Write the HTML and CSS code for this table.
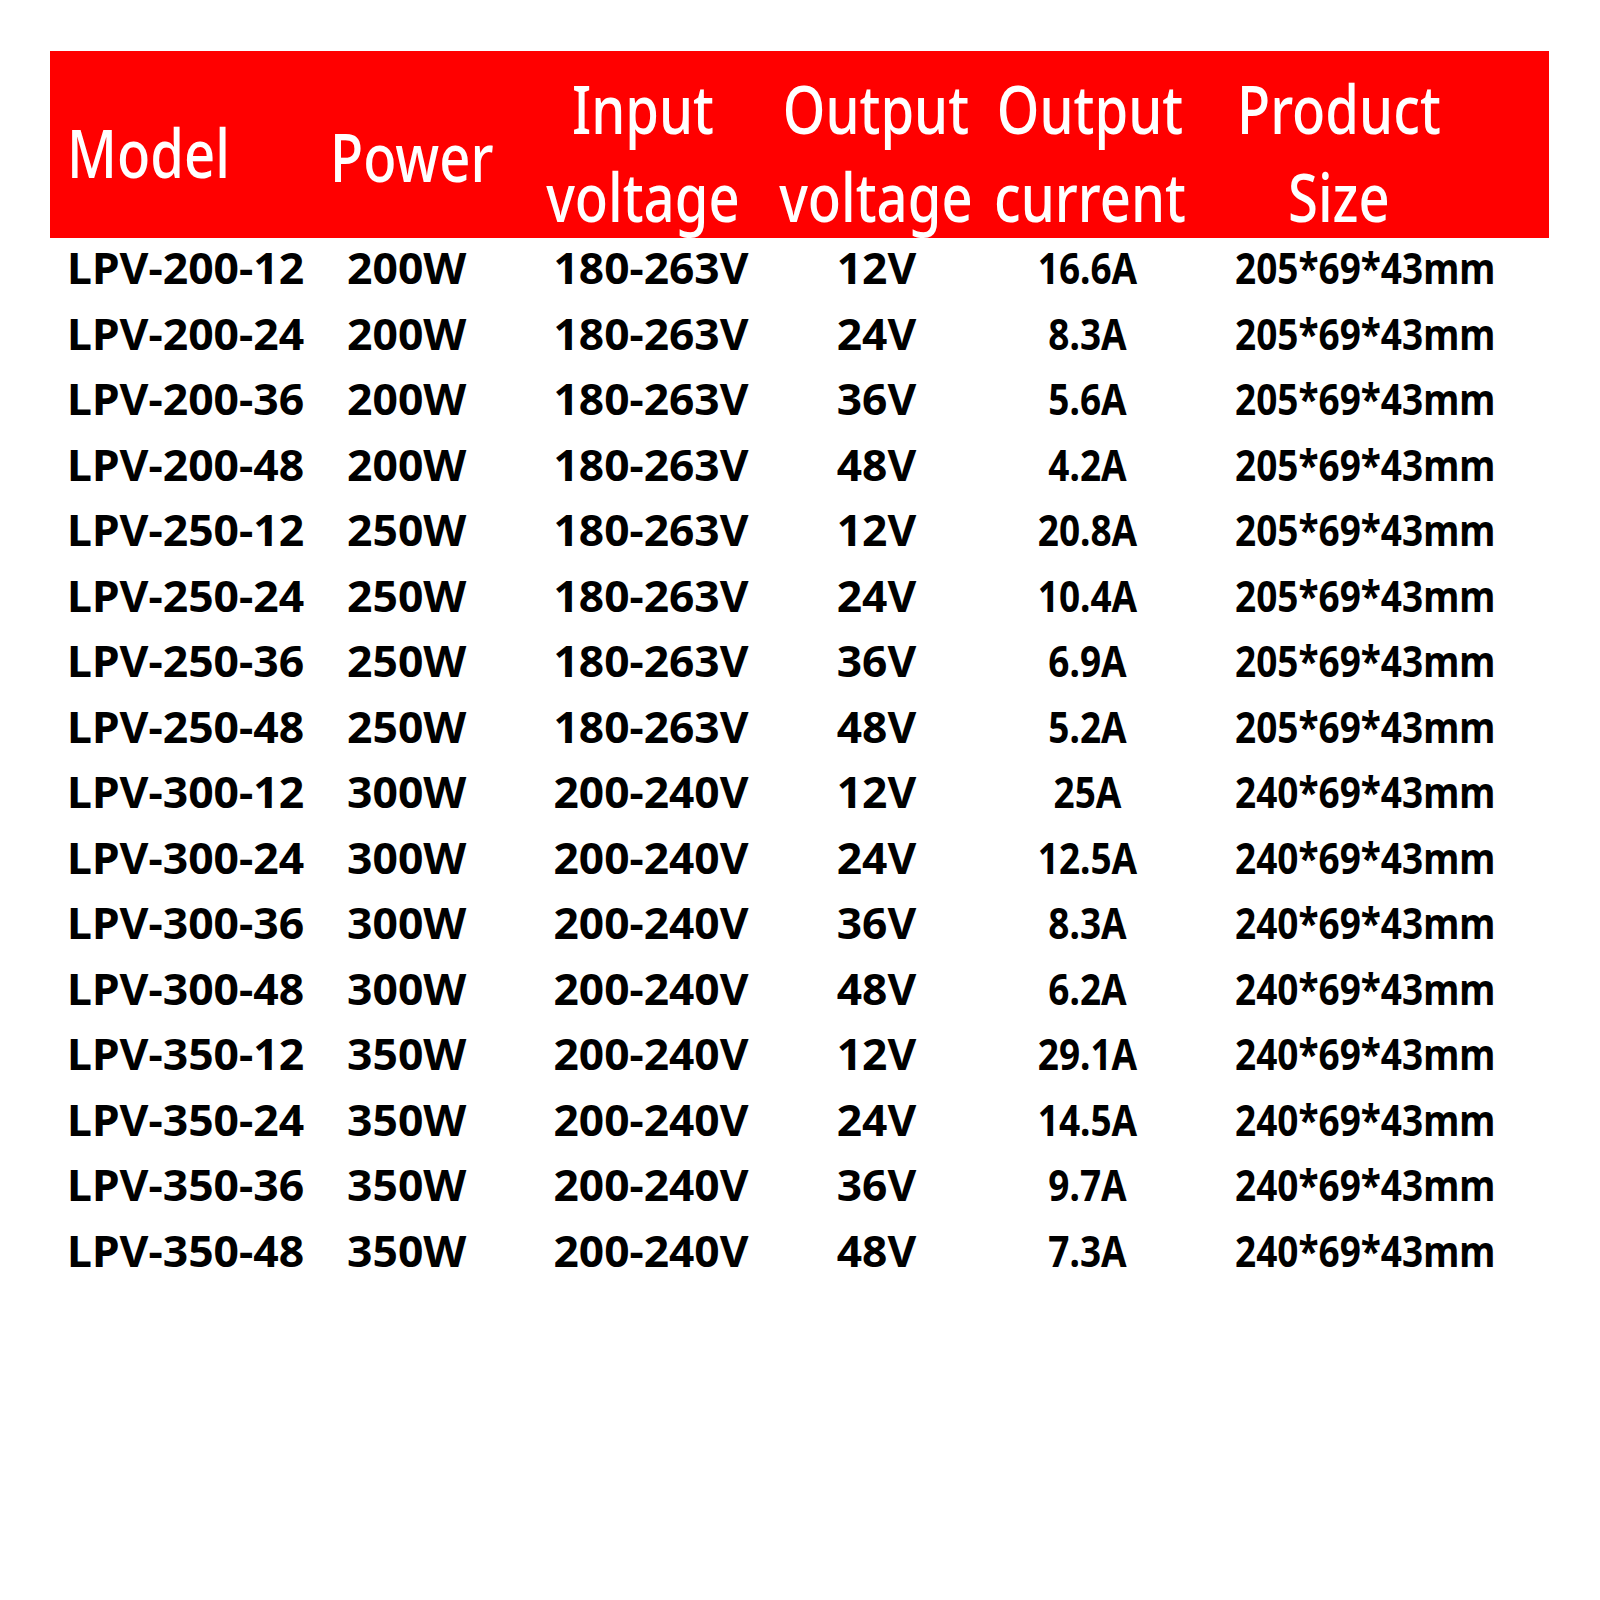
FILE: index.html
```html
<!DOCTYPE html>
<html lang="en">
<head>
<meta charset="utf-8">
<title>LPV Specifications</title>
<link rel="stylesheet" href="styles.css">
</head>
<body>
<div class="sheet">
  <div class="head">
    <div class="hc c1"><span class="ht left">Model</span></div>
    <div class="hc c2"><span class="ht left">Power</span></div>
    <div class="hc c3"><span class="ht">Input<br>voltage</span></div>
    <div class="hc c4"><span class="ht">Output<br>voltage</span></div>
    <div class="hc c5"><span class="ht">Output<br>current</span></div>
    <div class="hc c6"><span class="ht left">Product<br>Size</span></div>
  </div>
  <div class="rows">
    <div class="c1">LPV-200-12</div><div class="c2">200W</div><div class="c3">180-263V</div><div class="c4">12V</div><div class="c5">16.6A</div><div class="c6">205*69*43mm</div>
    <div class="c1">LPV-200-24</div><div class="c2">200W</div><div class="c3">180-263V</div><div class="c4">24V</div><div class="c5">8.3A</div><div class="c6">205*69*43mm</div>
    <div class="c1">LPV-200-36</div><div class="c2">200W</div><div class="c3">180-263V</div><div class="c4">36V</div><div class="c5">5.6A</div><div class="c6">205*69*43mm</div>
    <div class="c1">LPV-200-48</div><div class="c2">200W</div><div class="c3">180-263V</div><div class="c4">48V</div><div class="c5">4.2A</div><div class="c6">205*69*43mm</div>
    <div class="c1">LPV-250-12</div><div class="c2">250W</div><div class="c3">180-263V</div><div class="c4">12V</div><div class="c5">20.8A</div><div class="c6">205*69*43mm</div>
    <div class="c1">LPV-250-24</div><div class="c2">250W</div><div class="c3">180-263V</div><div class="c4">24V</div><div class="c5">10.4A</div><div class="c6">205*69*43mm</div>
    <div class="c1">LPV-250-36</div><div class="c2">250W</div><div class="c3">180-263V</div><div class="c4">36V</div><div class="c5">6.9A</div><div class="c6">205*69*43mm</div>
    <div class="c1">LPV-250-48</div><div class="c2">250W</div><div class="c3">180-263V</div><div class="c4">48V</div><div class="c5">5.2A</div><div class="c6">205*69*43mm</div>
    <div class="c1">LPV-300-12</div><div class="c2">300W</div><div class="c3">200-240V</div><div class="c4">12V</div><div class="c5">25A</div><div class="c6">240*69*43mm</div>
    <div class="c1">LPV-300-24</div><div class="c2">300W</div><div class="c3">200-240V</div><div class="c4">24V</div><div class="c5">12.5A</div><div class="c6">240*69*43mm</div>
    <div class="c1">LPV-300-36</div><div class="c2">300W</div><div class="c3">200-240V</div><div class="c4">36V</div><div class="c5">8.3A</div><div class="c6">240*69*43mm</div>
    <div class="c1">LPV-300-48</div><div class="c2">300W</div><div class="c3">200-240V</div><div class="c4">48V</div><div class="c5">6.2A</div><div class="c6">240*69*43mm</div>
    <div class="c1">LPV-350-12</div><div class="c2">350W</div><div class="c3">200-240V</div><div class="c4">12V</div><div class="c5">29.1A</div><div class="c6">240*69*43mm</div>
    <div class="c1">LPV-350-24</div><div class="c2">350W</div><div class="c3">200-240V</div><div class="c4">24V</div><div class="c5">14.5A</div><div class="c6">240*69*43mm</div>
    <div class="c1">LPV-350-36</div><div class="c2">350W</div><div class="c3">200-240V</div><div class="c4">36V</div><div class="c5">9.7A</div><div class="c6">240*69*43mm</div>
    <div class="c1">LPV-350-48</div><div class="c2">350W</div><div class="c3">200-240V</div><div class="c4">48V</div><div class="c5">7.3A</div><div class="c6">240*69*43mm</div>
  </div>
</div>
</body>
</html>
```
FILE: styles.css
```css
html, body {
  margin: 0;
  padding: 0;
  background: #ffffff;
}

.sheet {
  padding: 51px 51px 0 50px;
  width: 1499px;
  font-family: "Noto Sans", "Open Sans", sans-serif;
}

.head,
.rows {
  display: grid;
  grid-template-columns: 270px 210px 230px 225px 205px 359px;
}

.head {
  background: #ff0000;
  height: 187px;
  box-sizing: border-box;
  padding-top: 13px;
  color: #ffffff;
  font-size: 68px;
  font-weight: 500;
  line-height: 88px;
  align-items: start;
}

.hc {
  display: flex;
  white-space: nowrap;
  min-width: 0;
}

.ht {
  display: block;
  flex: none;
  text-align: center;
  transform: scaleX(0.80);
  transform-origin: center top;
}

.ht.left {
  transform-origin: left top;
}

.head .c1 { padding-left: 17px; margin-top: 44px; }
.head .c2 { padding-left: 10px; margin-top: 48px; }
.head .c3 { justify-content: center; padding-right: 4px; }
.head .c4 { justify-content: center; padding-left: 6px; }
.head .c5 { justify-content: center; padding-left: 4px; }
.head .c6 { padding-left: 47px; }

.rows {
  margin-top: -3px;
  color: #000000;
  font-size: 43px;
  font-weight: 700;
  line-height: 65.5px;
  white-space: nowrap;
}

.rows .c1 { padding-left: 17px; transform: scaleX(1.035); transform-origin: 17px center; }
.rows .c2 { padding-left: 27px; transform: scaleX(1.035); transform-origin: 27px center; }
.rows .c3 { text-align: center; padding-left: 12px; transform: scaleX(1.03); transform-origin: calc(50% + 6px) center; }
.rows .c4 { text-align: center; padding-left: 8px; transform: scaleX(1.03); transform-origin: calc(50% + 4px) center; }
.rows .c5 { text-align: center; transform: scaleX(0.86); transform-origin: center center; }
.rows .c6 { padding-left: 45px; transform: scaleX(0.86); transform-origin: 45px center; }
```
